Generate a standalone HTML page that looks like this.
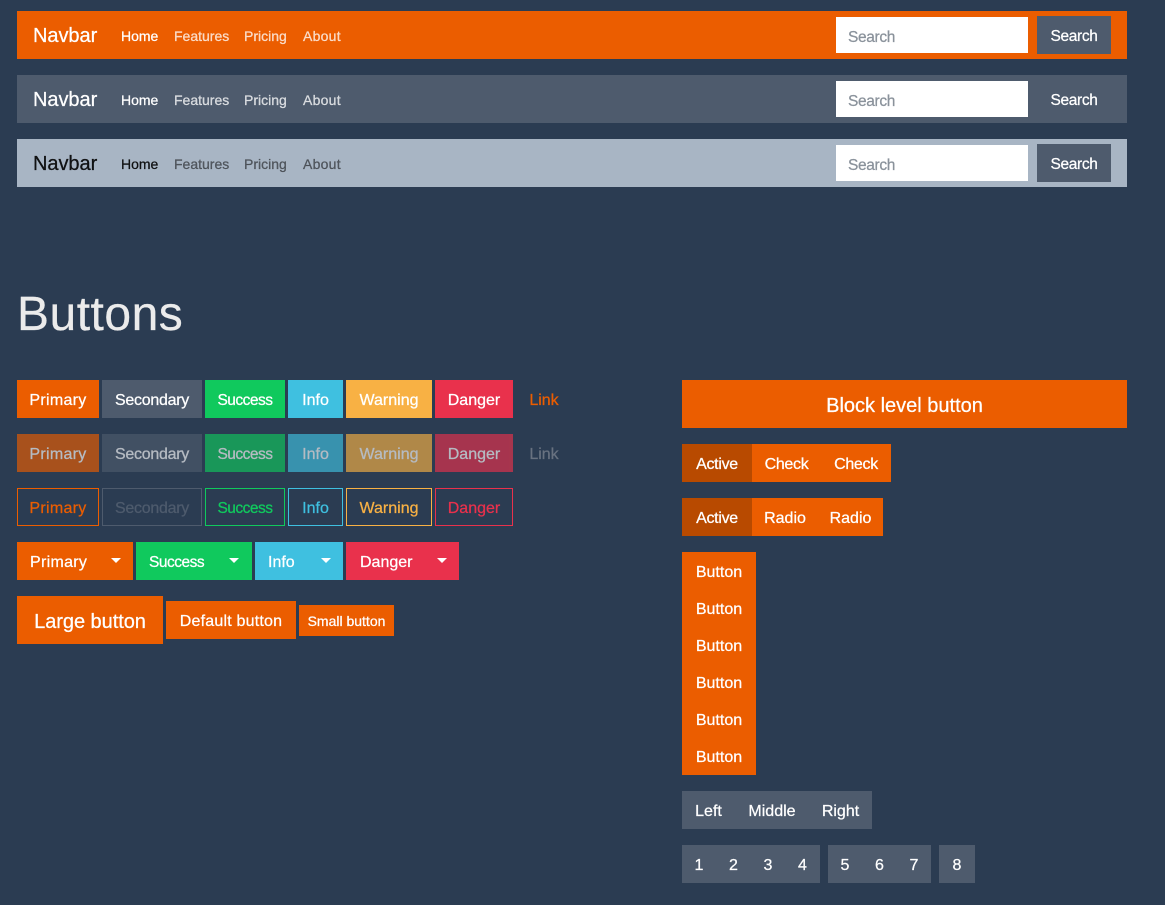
<!DOCTYPE html>
<html lang="en"><head><meta charset="utf-8"><title>Buttons</title>
<style>
html,body{margin:0;padding:0;width:1165px;height:905px;overflow:hidden;background:#2B3C52;font-family:"Liberation Sans",Arial,sans-serif;}
body{position:relative;-webkit-text-stroke:.25px}
.a{position:absolute;white-space:nowrap}
.nav{position:absolute;left:17px;width:1110px;height:48px}
.o{background:#EB5D00}.s{background:#4E5B6D}.l{background:#A8B5C4}
.brand{position:absolute;left:16px;top:0;line-height:51px;font-size:20px;color:#fff;letter-spacing:-.05px}
.lnk{position:absolute;top:0;line-height:50px;font-size:14px;color:rgba(255,255,255,.75)}
.lnk.h{color:#fff}
.l .brand{color:rgba(0,0,0,.9)}.l .lnk{color:rgba(0,0,0,.5)}.l .lnk.h{color:rgba(0,0,0,.9)}
.lnk.ab{letter-spacing:.25px}
.inp{position:absolute;left:819px;top:6px;width:180px;height:36px;padding-left:12px;background:#fff;color:#8A929B;font-size:15.5px;letter-spacing:-.35px;line-height:42px}
.sb{position:absolute;left:1020px;top:5px;width:74px;height:38px;text-align:center;line-height:41px;color:#fff;font-size:15.5px;letter-spacing:-.35px}
.b{position:absolute;height:38px;line-height:41px;font-size:16px;color:#fff;text-align:center;white-space:nowrap;box-sizing:border-box}
.ol{background:none;line-height:39px;border:1px solid}
.car{text-align:left;padding-left:13px}
.car i{position:absolute;top:16px;width:0;height:0;border-left:5px solid transparent;border-right:5px solid transparent;border-top:5px solid #fff}
.d{opacity:.65}
.gr{background:#10C95D}.in{background:#3FC0E0}.wa{background:#F8B144}.da{background:#E9314C}.ac{background:#B84A00}
.pri{letter-spacing:.3px}.sec{letter-spacing:-.27px}.suc{letter-spacing:-.5px;font-size:15.5px}.chk{letter-spacing:-.3px}
</style></head><body>

<div class="nav o" style="top:11px"><span class="brand">Navbar</span><span class="lnk h" style="left:104px">Home</span><span class="lnk" style="left:157px">Features</span><span class="lnk" style="left:227px">Pricing</span><span class="lnk ab" style="left:286px">About</span><div class="inp">Search</div><div class="sb s">Search</div></div>
<div class="nav s" style="top:75px"><span class="brand">Navbar</span><span class="lnk h" style="left:104px">Home</span><span class="lnk" style="left:157px">Features</span><span class="lnk" style="left:227px">Pricing</span><span class="lnk ab" style="left:286px">About</span><div class="inp">Search</div><div class="sb s">Search</div></div>
<div class="nav l" style="top:139px"><span class="brand">Navbar</span><span class="lnk h" style="left:104px">Home</span><span class="lnk" style="left:157px">Features</span><span class="lnk" style="left:227px">Pricing</span><span class="lnk ab" style="left:286px">About</span><div class="inp">Search</div><div class="sb s">Search</div></div>

<h1 class="a" style="margin:0;left:17px;top:286px;font-size:48px;line-height:58px;font-weight:400;color:#EBEBEB;letter-spacing:.5px">Buttons</h1>

<!-- row 1 -->
<div class="b o" style="left:17px;top:380px;width:82px"><span class="pri">Primary</span></div>
<div class="b s" style="left:102px;top:380px;width:100px"><span class="sec">Secondary</span></div>
<div class="b gr" style="left:205px;top:380px;width:80px"><span class="suc">Success</span></div>
<div class="b in" style="left:288px;top:380px;width:55px">Info</div>
<div class="b wa" style="left:346px;top:380px;width:86px">Warning</div>
<div class="b da" style="left:435px;top:380px;width:78px">Danger</div>
<div class="b" style="left:516px;top:380px;width:56px;color:#EB5D00">Link</div>

<!-- row 2 -->
<div class="b o d" style="left:17px;top:434px;width:82px"><span class="pri">Primary</span></div>
<div class="b s d" style="left:102px;top:434px;width:100px"><span class="sec">Secondary</span></div>
<div class="b gr d" style="left:205px;top:434px;width:80px"><span class="suc">Success</span></div>
<div class="b in d" style="left:288px;top:434px;width:55px">Info</div>
<div class="b wa d" style="left:346px;top:434px;width:86px">Warning</div>
<div class="b da d" style="left:435px;top:434px;width:78px">Danger</div>
<div class="b" style="left:516px;top:434px;width:56px;color:#687280">Link</div>

<!-- row 3 -->
<div class="b ol" style="left:17px;top:488px;width:82px;color:#EB5D00"><span class="pri">Primary</span></div>
<div class="b ol" style="left:102px;top:488px;width:100px;color:#4E5B6D"><span class="sec">Secondary</span></div>
<div class="b ol" style="left:205px;top:488px;width:80px;color:#10C95D"><span class="suc">Success</span></div>
<div class="b ol" style="left:288px;top:488px;width:55px;color:#3FC0E0">Info</div>
<div class="b ol" style="left:346px;top:488px;width:86px;color:#F8B144">Warning</div>
<div class="b ol" style="left:435px;top:488px;width:78px;color:#E9314C">Danger</div>

<!-- row 4 -->
<div class="b o car" style="left:17px;top:542px;width:116px"><span class="pri">Primary</span><i style="left:94px"></i></div>
<div class="b gr car" style="left:136px;top:542px;width:116px"><span class="suc">Success</span><i style="left:93px"></i></div>
<div class="b in car" style="left:255px;top:542px;width:88px">Info<i style="left:66px"></i></div>
<div class="b da car" style="left:346px;top:542px;width:113px;padding-left:14px">Danger<i style="left:91px"></i></div>

<!-- row 5 -->
<div class="b o" style="left:17px;top:596px;width:146px;height:48px;line-height:53px;font-size:20px;letter-spacing:-.05px">Large button</div>
<div class="b o" style="left:166px;top:601px;width:130px;letter-spacing:.2px">Default button</div>
<div class="b o" style="left:299px;top:605px;width:95px;height:31px;line-height:33px;font-size:14px">Small button</div>

<!-- right column -->
<div class="b o" style="left:682px;top:380px;width:445px;height:48px;line-height:53px;font-size:20px">Block level button</div>

<div class="b o" style="left:682px;top:444px;width:209px"></div>
<div class="b ac chk" style="left:682px;top:444px;width:70px">Active</div>
<div class="b chk" style="left:752px;top:444px;width:69px">Check</div>
<div class="b chk" style="left:821px;top:444px;width:70px">Check</div>

<div class="b o" style="left:682px;top:498px;width:201px"></div>
<div class="b ac chk" style="left:682px;top:498px;width:70px">Active</div>
<div class="b" style="left:752px;top:498px;width:66px">Radio</div>
<div class="b" style="left:818px;top:498px;width:65px">Radio</div>

<div class="b o" style="left:682px;top:552px;width:74px;height:223px"></div>
<div class="b" style="left:682px;top:552px;width:74px">Button</div>
<div class="b" style="left:682px;top:589px;width:74px">Button</div>
<div class="b" style="left:682px;top:626px;width:74px">Button</div>
<div class="b" style="left:682px;top:663px;width:74px">Button</div>
<div class="b" style="left:682px;top:700px;width:74px">Button</div>
<div class="b" style="left:682px;top:737px;width:74px">Button</div>

<div class="b s" style="left:682px;top:791px;width:190px"></div>
<div class="b" style="left:682px;top:791px;width:53px">Left</div>
<div class="b" style="left:735px;top:791px;width:74px">Middle</div>
<div class="b" style="left:809px;top:791px;width:63px">Right</div>

<div class="b s" style="left:682px;top:845px;width:138px"></div>
<div class="b" style="left:682px;top:845px;width:34px">1</div>
<div class="b" style="left:716px;top:845px;width:35px">2</div>
<div class="b" style="left:751px;top:845px;width:34px">3</div>
<div class="b" style="left:785px;top:845px;width:35px">4</div>
<div class="b s" style="left:828px;top:845px;width:103px"></div>
<div class="b" style="left:828px;top:845px;width:34px">5</div>
<div class="b" style="left:862px;top:845px;width:35px">6</div>
<div class="b" style="left:897px;top:845px;width:34px">7</div>
<div class="b s" style="left:939px;top:845px;width:36px">8</div>

</body></html>
